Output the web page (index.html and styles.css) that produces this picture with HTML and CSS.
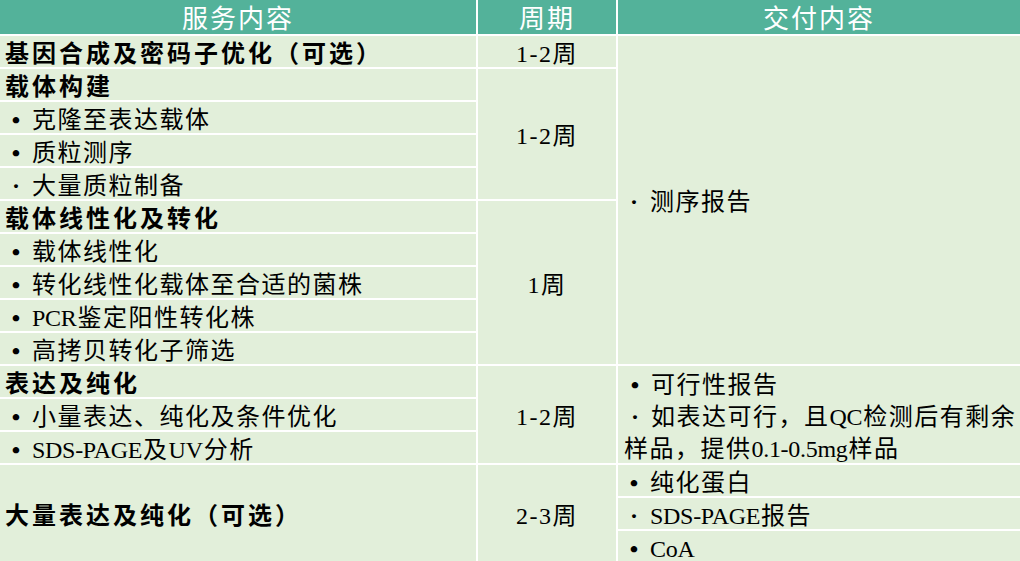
FILE: index.html
```html
<!DOCTYPE html>
<html lang="zh-CN">
<head>
<meta charset="utf-8">
<title>服务内容</title>
<link rel="stylesheet" href="styles.css">
</head>
<body>
<div class="table">
  <div class="head c1">服务内容</div>
  <div class="head c2">周期</div>
  <div class="head c3">交付内容</div>

  <div class="cell c1 bold">基因合成及密码子优化（可选）</div>
  <div class="cell c2 mid">1-2周</div>
  <div class="cell c3 span10"><span class="dot small">·</span>测序报告</div>

  <div class="cell c1 bold">载体构建</div>
  <div class="cell c2 mid span4">1-2周</div>
  <div class="cell c1"><span class="dot">•</span>克隆至表达载体</div>
  <div class="cell c1"><span class="dot">•</span>质粒测序</div>
  <div class="cell c1"><span class="dot small">·</span>大量质粒制备</div>

  <div class="cell c1 bold">载体线性化及转化</div>
  <div class="cell c2 mid span5">1周</div>
  <div class="cell c1"><span class="dot">•</span>载体线性化</div>
  <div class="cell c1"><span class="dot">•</span>转化线性化载体至合适的菌株</div>
  <div class="cell c1"><span class="dot">•</span><span class="lat">PCR</span>鉴定阳性转化株</div>
  <div class="cell c1"><span class="dot">•</span>高拷贝转化子筛选</div>

  <div class="cell c1 bold">表达及纯化</div>
  <div class="cell c2 mid span3">1-2周</div>
  <div class="cell c3 span3 multi">
    <p><span class="dot">•</span>可行性报告</p>
    <p><span class="dot small">·</span>如表达可行，且<span class="lat">QC</span>检测后有剩余<br>样品，提供<span class="lat">0.1-0.5mg</span>样品</p>
  </div>
  <div class="cell c1"><span class="dot">•</span>小量表达、纯化及条件优化</div>
  <div class="cell c1"><span class="dot">•</span><span class="lat">SDS-PAGE</span>及<span class="lat">UV</span>分析</div>

  <div class="cell c1 bold span3">大量表达及纯化（可选）</div>
  <div class="cell c2 mid span3">2-3周</div>
  <div class="cell c3"><span class="dot">•</span>纯化蛋白</div>
  <div class="cell c3"><span class="dot small">·</span><span class="lat">SDS-PAGE</span>报告</div>
  <div class="cell c3"><span class="dot">•</span><span class="lat">CoA</span></div>
</div>
</body>
</html>
```

FILE: styles.css
```css
html, body {
  margin: 0;
  padding: 0;
  overflow: hidden;
  background: #ffffff;
}

.table {
  display: grid;
  grid-template-columns: 476px 138px 1fr;
  grid-template-rows: 34px repeat(16, 31px);
  gap: 2px;
  background: #ffffff;
  width: 1020px;
  font-family: "Liberation Serif", "Noto Sans CJK SC", serif;
  font-size: 24px;
  color: #000000;
}

.c1 { grid-column: 1; }
.c2 { grid-column: 2; }
.c3 { grid-column: 3; }

.span3 { grid-row: span 3; }
.span4 { grid-row: span 4; }
.span5 { grid-row: span 5; }
.span10 { grid-row: span 10; }

.head {
  background: #53b29a;
  color: #ffffff;
  font-size: 26px;
  letter-spacing: 2px;
  line-height: 26px;
  display: flex;
  align-items: center;
  justify-content: center;
  padding-top: 6px;
  box-sizing: border-box;
}

.cell {
  background: #e2efda;
  display: flex;
  align-items: center;
  padding: 4px 0 0 5px;
  box-sizing: border-box;
  line-height: 24px;
  letter-spacing: 1.5px;
  white-space: nowrap;
}

.bold {
  font-weight: bold;
  letter-spacing: 3px;
}

.mid {
  justify-content: center;
  padding-left: 0;
}

.lat {
  letter-spacing: -0.3px;
  margin-right: 1px;
}

.dot {
  display: inline-block;
  width: 22px;
  margin-right: 5px;
  text-align: center;
  letter-spacing: 0;
  font-weight: bold;
}

.multi {
  flex-direction: column;
  align-items: flex-start;
  justify-content: center;
  padding-left: 6px;
  padding-top: 5px;
}

.multi p {
  margin: 0;
  line-height: 32px;
}
```
